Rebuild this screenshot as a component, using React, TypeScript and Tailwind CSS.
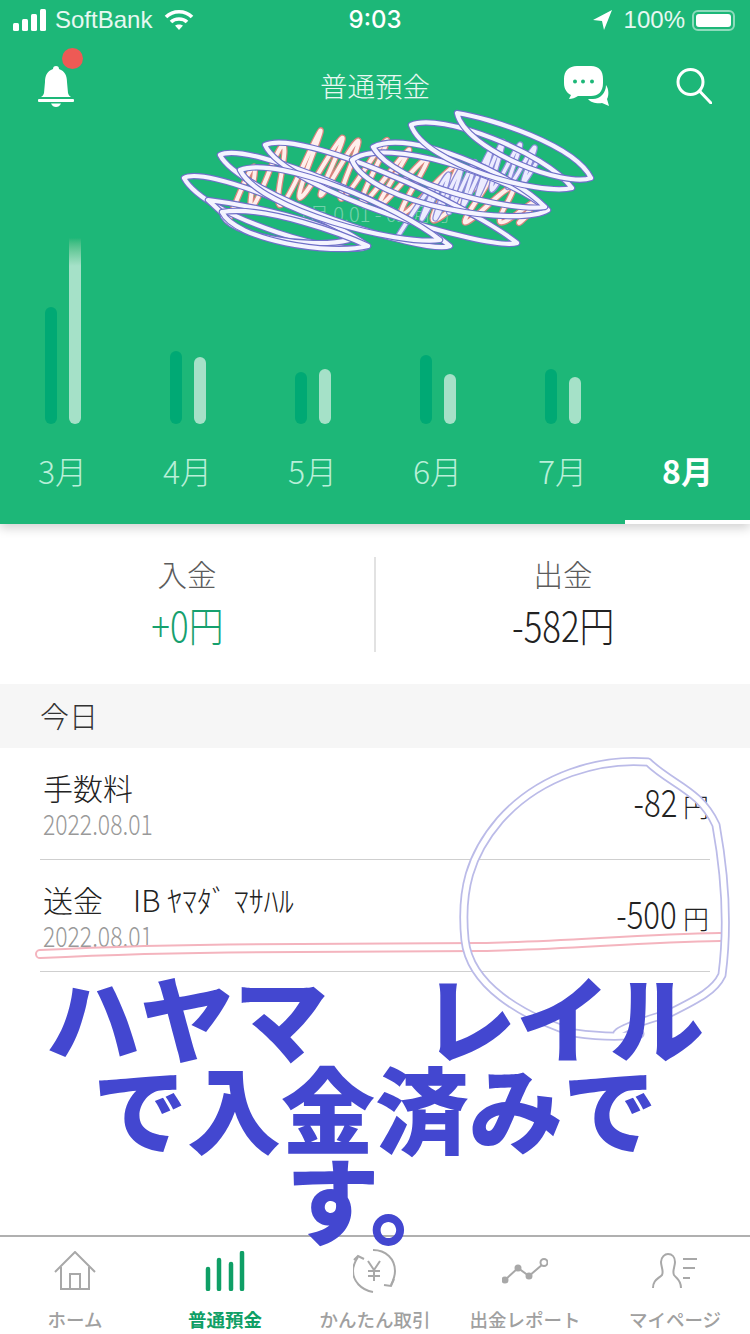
const FONT = "font-['Noto_Sans_CJK_JP','Noto_Sans',sans-serif]"

const MONTHS = [
  { label: '3月', dark: 117, light: 186 },
  { label: '4月', dark: 73, light: 67 },
  { label: '5月', dark: 52, light: 55 },
  { label: '6月', dark: 69, light: 50 },
  { label: '7月', dark: 55, light: 47 },
  { label: '8月', dark: 0, light: 0 },
]

// scribbles drawn over the account name
const BLUE_LOOPS = [
  'M184 178 C205 165 330 218 368 246 C350 260 205 218 184 178Z',
  'M220 155 C250 140 410 212 450 246 C425 256 240 195 220 155Z',
  'M265 145 C300 128 470 205 517 243 C490 252 285 190 265 145Z',
  'M240 170 C280 155 400 208 440 240 C400 246 260 210 240 170Z',
  'M352 160 C385 135 515 178 548 210 C520 228 370 205 352 160Z',
  'M373 147 C410 128 515 175 545 207 C510 212 395 185 373 147Z',
  'M411 125 C440 112 545 152 572 188 C540 196 425 165 411 125Z',
  'M457 113 C490 118 575 145 591 178 C565 188 465 150 457 113Z',
  'M208 200 C250 205 325 222 349 240 C310 250 225 235 222 213Z',
  'M222 212 C265 205 345 235 368 246 C330 256 235 240 222 212Z',
]
const BLUE_ZIG = [
  [398, 236], [446, 160], [412, 240], [458, 152], [426, 242], [470, 146], [440, 236], [484, 138], [454, 230], [500, 126],
  [468, 222], [512, 116], [482, 214], [530, 122], [498, 208], [544, 128], [514, 202], [562, 118],
]
const PINK_ZIG = [
  [228, 222], [262, 135], [244, 234], [292, 115], [270, 238], [335, 96], [284, 230], [358, 108], [306, 224], [372, 112],
  [326, 228], [404, 110], [344, 232], [428, 122], [360, 232], [446, 132], [382, 240], [476, 140], [414, 244], [506, 158],
  [448, 242], [526, 170], [488, 236], [548, 190], [510, 232], [544, 200],
]

// smooth curve through the midpoints, so the turns come out round as a finger stroke does
function smooth(points: number[][]) {
  let d = `M${points[0][0]} ${points[0][1]}`
  for (let i = 1; i < points.length - 1; i++) {
    const mx = (points[i][0] + points[i + 1][0]) / 2
    const my = (points[i][1] + points[i + 1][1]) / 2
    d += ` Q${points[i][0]} ${points[i][1]} ${mx} ${my}`
  }
  return d
}

function Scribble() {
  const pink = smooth(PINK_ZIG)
  const blue = smooth(BLUE_ZIG)
  return (
    <svg viewBox="0 0 750 1334" className="absolute inset-0 z-20 w-[750px] h-[1334px] pointer-events-none" fill="none" strokeLinecap="round" strokeLinejoin="round">
      <path d={pink} stroke="#D9847E" strokeWidth="6.5" />
      <path d={pink} stroke="#FFF0EC" strokeWidth="4" />
      <path d={blue} stroke="#8C8CD8" strokeWidth="6" />
      <path d={blue} stroke="#ECECFF" strokeWidth="3.5" />
      {BLUE_LOOPS.map(d => (
        <g key={d}>
          <path d={d} stroke="#6F70C8" strokeWidth="6.5" />
          <path d={d} stroke="#F4F4FF" strokeWidth="4.2" />
        </g>
      ))}
    </svg>
  )
}

const RED_LINE = 'M40 954 C120 950 200 948 300 948 L480 947 C560 946 640 938 720 937'
const CIRCLE =
  'M648 762 C600 758 540 775 500 820 C470 855 460 890 465 940 C470 985 520 1015 574 1033 C610 1038 630 1036 640 1034 C600 1040 612 1030 670 1013 C700 998 715 990 722 975 C728 930 726 880 716 825 C700 790 672 785 648 762Z'

function Markup() {
  return (
    <svg viewBox="0 0 750 1334" className="absolute inset-0 z-20 w-[750px] h-[1334px] pointer-events-none" fill="none" strokeLinecap="round" strokeLinejoin="round">
      <path d={RED_LINE} stroke="#F4B4BE" strokeWidth="10" />
      <path d={RED_LINE} stroke="#FFF" strokeWidth="6" />
      <path d={CIRCLE} stroke="#BBBBE8" strokeWidth="9" />
      <path d={CIRCLE} stroke="#FFF" strokeWidth="5.5" />
    </svg>
  )
}

function StatusBar() {
  return (
    <div className="h-10 flex items-center justify-between pl-[13px] pr-[15px] text-white font-['Liberation_Sans',sans-serif] text-[24px] relative">
      <div className="flex items-center">
        <svg width="33" height="22" viewBox="0 0 33 22" fill="#fff">
          <rect x="0" y="14" width="6" height="8" rx="1.5" />
          <rect x="9" y="10" width="6" height="12" rx="1.5" />
          <rect x="18" y="5" width="6" height="17" rx="1.5" />
          <rect x="27" y="0" width="6" height="22" rx="1.5" />
        </svg>
        <span className="ml-[9px] text-white/90">SoftBank</span>
        <svg className="ml-3" width="30" height="22" viewBox="0 0 30 22" fill="none" stroke="#fff" strokeWidth="3.6">
          <path d="M2 8 C9 1 21 1 28 8" />
          <path d="M7 13 C11 9 19 9 23 13" />
          <path d="M15 21 L11 16.5 C13 15 17 15 19 16.5Z" fill="#fff" stroke="none" />
        </svg>
      </div>
      <span className="absolute left-0 right-0 text-center font-['Inter',sans-serif] font-medium">9:03</span>
      <div className="flex items-center">
        <svg width="19" height="20" viewBox="0 0 19 20" fill="#fff"><path d="M19 0 L0 10 L9 11 L11 20Z" /></svg>
        <span className="ml-3 text-white/90">100%</span>
        <div className="ml-[7px] w-[43px] h-[21px] rounded-[6px] border-2 border-white/50 p-[2px]">
          <div className="w-full h-full rounded-[3px] bg-white" />
        </div>
      </div>
    </div>
  )
}

function Header() {
  return (
    <div className="relative h-[92px] flex items-center justify-between pl-[38px] pr-[38px]">
      <div className="relative mt-[-1px]">
        <svg width="36" height="42" viewBox="0 0 36 42" fill="#fff">
          <path d="M18 1 C20 1 21 2 21 4 C27 6 29 11 29 17 L30 28 C30.5 30 31.5 31 33 32 H3 C4.5 31 5.5 30 6 28 L7 17 C7 11 9 6 15 4 C15 2 16 1 18 1Z" />
          <rect x="0" y="34" width="36" height="3" rx="1" />
          <path d="M13 38.5 H23 C22 41 20 42 18 42 C16 42 14 41 13 38.5Z" />
        </svg>
        <span className="absolute -top-[17px] left-[24px] w-[21px] h-[21px] rounded-full bg-[#EE5A55]" />
      </div>
      <span className={`absolute left-0 right-0 text-center text-white/90 text-[27.5px] font-light ${FONT}`}>普通預金</span>
      <div className="flex items-center gap-[66px]">
        <svg width="46" height="40" viewBox="0 0 46 40" fill="#fff">
          <path d="M13 0 H27 C35 0 39 5 39 13 V17 C39 26 34 30 27 30 H14 C11 32 8 33 5 33 L7 29 C3 27 0 23 0 17 V13 C0 5 5 0 13 0Z" />
          <path d="M42 19 C45 23 45 30 43 33 L45 40 L38 37 C34 38 27 37 24 33 H29 C36 33 42 27 42 19Z" />
          <circle cx="11" cy="15.500" r="2" fill="#1DB778" />
          <circle cx="19" cy="15.500" r="2" fill="#1DB778" />
          <circle cx="28" cy="15.500" r="2" fill="#1DB778" />
        </svg>
        <svg width="36" height="36" viewBox="0 0 36 36" fill="none" stroke="#fff" strokeWidth="3" strokeLinecap="round">
          <circle cx="14.500" cy="14" r="12.500" />
          <path d="M23.500 23 L35 35" />
        </svg>
      </div>
    </div>
  )
}

function Chart() {
  return (
    <div className="grid grid-cols-6">
      {MONTHS.map((m, i) => {
        const active = i === MONTHS.length - 1
        return (
          <div key={m.label} className="flex flex-col">
            <div className="h-[192px] flex items-end justify-center gap-3">
              {!active && (
                <>
                  <div className="w-3 rounded-full bg-[#00A974]" style={{ height: m.dark }} />
                  <div
                    className={`w-3 rounded-b-full ${i === 0 ? 'bg-gradient-to-t from-[#A5E1C8] from-85% to-[#1DB778]' : 'rounded-t-full bg-[#A5E1C8]'}`}
                    style={{ height: m.light }}
                  />
                </>
              )}
            </div>
            <div className={`h-[100px] pt-[24px] text-center text-[32px] leading-[44px] ${FONT} ${active ? 'border-b-4 border-white text-white font-bold' : 'text-[#B9EFD8] font-light'}`}>
              {m.label}
            </div>
          </div>
        )
      })}
    </div>
  )
}

function Stat({ label, value, color }: { label: string; value: string; color: string }) {
  return (
    <div className="flex-1 flex flex-col items-center">
      <span className="mt-[-3px] text-[29.500px] leading-[38px] font-light text-[#5c5c5c]">{label}</span>
      <span className={`mt-[10px] text-[41px] leading-[44px] font-light scale-x-[0.85] ${color}`}>{value}</span>
    </div>
  )
}

function Row({ title, amount }: { title: string; amount: string }) {
  return (
    <div className="h-[112px] mx-10 border-b border-[#cfcfcf] relative flex justify-between items-start">
      <div className="pl-[3px] pt-[21px]">
        <p className="text-[30px] leading-[36px] font-light text-[#222]">{title}</p>
        <p className="mt-[1px] text-[28px] leading-[34px] font-light text-[#999] origin-left scale-x-[0.82] whitespace-nowrap">2022.08.01</p>
      </div>
      <p className="pt-[31px] pr-px text-[#222] font-light flex items-baseline">
        <span className="text-[38px] leading-[44px] origin-right scale-x-[0.82] inline-block translate-x-[-6px]">{amount}</span>
        <span className="text-[26px] leading-[44px]">円</span>
      </p>
    </div>
  )
}

function HomeIcon() {
  return (
    <svg width="42" height="40" viewBox="0 0 42 40" fill="none" stroke="#a8a8a8" strokeWidth="2">
      <path d="M1 21 L21 1 L41 21" />
      <path d="M7 16 V38 H35 V16" />
      <path d="M16 38 V23 H26 V38" />
    </svg>
  )
}
function BarsIcon() {
  return (
    <svg width="40" height="40" viewBox="0 0 40 40" fill="none" stroke="#0F9F66" strokeWidth="4.500" strokeLinecap="round">
      <path d="M3 38 V18" />
      <path d="M14 38 V9" />
      <path d="M26 38 V13" />
      <path d="M37 38 V2" />
    </svg>
  )
}
function YenIcon() {
  return (
    <svg width="44" height="44" viewBox="0 0 44 44" fill="none" stroke="#a8a8a8" strokeWidth="2">
      <path d="M5 8 C1 14 0 18 0 22 C0 32 8 41 20 43" />
      <path d="M1 11 L5 7 L11 10" />
      <path d="M20 1 C33 1 42 10 42 22 C42 26 41 30 38 36" />
      <path d="M41 30 L38 37 L31 36" />
      <path d="M15 12 L21 21 L27 12 M21 21 V32 M15 22 H27 M15 27 H27" />
    </svg>
  )
}
function LineIcon() {
  return (
    <svg width="46" height="26" viewBox="0 0 46 26" fill="none" stroke="#a8a8a8" strokeWidth="2">
      <path d="M3 22 L16 10 L27 18 L41 6" />
      <circle cx="3" cy="22" r="2.500" fill="#a8a8a8" />
      <circle cx="16" cy="10" r="2.500" fill="#a8a8a8" />
      <circle cx="27" cy="18" r="2.500" fill="#a8a8a8" />
      <circle cx="42" cy="4.500" r="3.500" fill="#fff" />
    </svg>
  )
}
function PersonIcon() {
  return (
    <svg width="46" height="36" viewBox="0 0 46 36" fill="none" stroke="#a8a8a8" strokeWidth="2">
      <path d="M1 35 C1 27 6 26 10 22 C12 18 9 14 9 9 C9 4 13 1 16 1 C20 1 23 4 23 9 C23 14 20 18 22 22 C25 26 29 27 29 35" />
      <path d="M31 6 H45 M31 15 H43 M31 25 H38" />
    </svg>
  )
}

const NAV = [
  { label: 'ホーム', icon: <HomeIcon /> },
  { label: '普通預金', icon: <BarsIcon />, active: true },
  { label: 'かんたん取引', icon: <YenIcon /> },
  { label: '出金レポート', icon: <LineIcon /> },
  { label: 'マイページ', icon: <PersonIcon /> },
]

function BottomNav() {
  return (
    <nav className="mt-auto h-[99px] border-t-2 border-[#b0b0b0] grid grid-cols-5 bg-white">
      {NAV.map(n => (
        <div key={n.label} className="flex flex-col items-center">
          <div className="h-[68px] flex items-center">{n.icon}</div>
          <span className={`text-[18.500px] leading-[28px] whitespace-nowrap ${n.active ? 'text-[#0F9F66] font-bold' : 'text-[#a0a0a0] font-medium'}`}>
            {n.label}
          </span>
        </div>
      ))}
    </nav>
  )
}

export default function App() {
  return (
    <div className={`relative w-[750px] h-[1334px] overflow-hidden bg-white flex flex-col ${FONT}`}>
      <div className="relative z-10 bg-[#1DB778] h-[524px] shadow-[0_4px_10px_rgba(0,0,0,0.18)] shrink-0">
        <StatusBar />
        <Header />
        <div className="h-[100px] flex items-end justify-center pb-[3px] text-[20px] text-white/40 font-light">
          7月 0.01 - 02 月分
        </div>
        <Chart />
      </div>

      {/* In / out totals */}
      <div className="h-[160px] pt-[33px] shrink-0">
        <div className="h-[95px] flex">
          <Stat label="入金" value="+0円" color="text-[#16A06E]" />
          <div className="w-0.5 bg-[#e2e2e2]" />
          <Stat label="出金" value="-582円" color="text-[#222]" />
        </div>
      </div>

      <div className="h-16 shrink-0 bg-[#F6F6F6] pl-10 flex items-center text-[29px] font-light text-[#333]">今日</div>

      <Row title="手数料" amount="-82" />
      <Row title="送金　IB ﾔﾏﾀﾞ ﾏｻﾊﾙ" amount="-500" />

      <BottomNav />

      <Scribble />
      <Markup />

      {/* Big caption pasted over the screenshot */}
      <div className="absolute z-30 left-0 right-0 top-[970px] text-center text-[94px] leading-[91px] font-black text-[#4347D0] whitespace-nowrap">
        <div>ハヤマ　レイル</div>
        <div>で入金済みで</div>
        <div>す。</div>
      </div>
    </div>
  )
}
